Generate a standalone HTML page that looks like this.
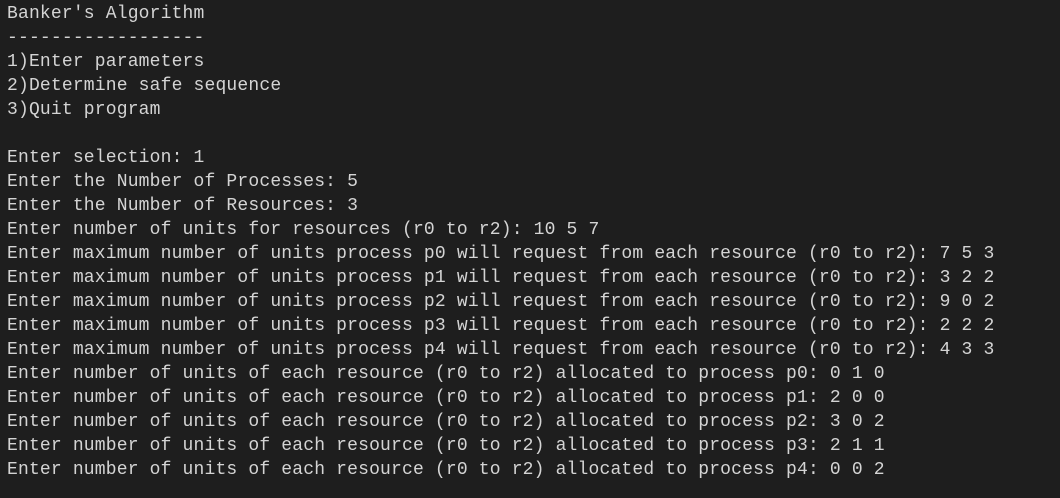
<!DOCTYPE html>
<html><head><style>
html,body{margin:0;padding:0;background:#1e1e1e;width:1060px;height:498px;overflow:hidden}
pre{margin:0;padding:2px 0 0 7px;font-family:"Liberation Mono",monospace;font-size:18px;line-height:24px;letter-spacing:0.17px;color:#d4d4d4}
</style></head><body><pre>Banker's Algorithm
------------------
1)Enter parameters
2)Determine safe sequence
3)Quit program

Enter selection: 1
Enter the Number of Processes: 5
Enter the Number of Resources: 3
Enter number of units for resources (r0 to r2): 10 5 7
Enter maximum number of units process p0 will request from each resource (r0 to r2): 7 5 3
Enter maximum number of units process p1 will request from each resource (r0 to r2): 3 2 2
Enter maximum number of units process p2 will request from each resource (r0 to r2): 9 0 2
Enter maximum number of units process p3 will request from each resource (r0 to r2): 2 2 2
Enter maximum number of units process p4 will request from each resource (r0 to r2): 4 3 3
Enter number of units of each resource (r0 to r2) allocated to process p0: 0 1 0
Enter number of units of each resource (r0 to r2) allocated to process p1: 2 0 0
Enter number of units of each resource (r0 to r2) allocated to process p2: 3 0 2
Enter number of units of each resource (r0 to r2) allocated to process p3: 2 1 1
Enter number of units of each resource (r0 to r2) allocated to process p4: 0 0 2</pre></body></html>
